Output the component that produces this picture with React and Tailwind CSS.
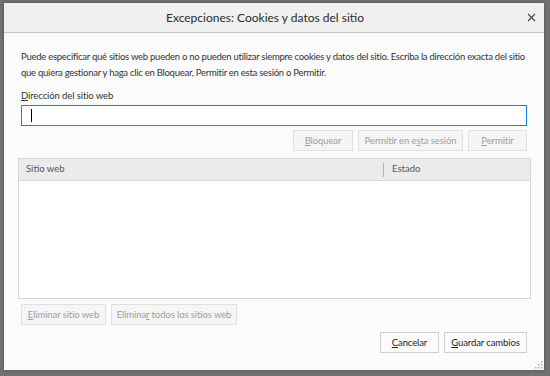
import React from "react";

const font = { fontFamily: "Lato, 'Noto Sans', sans-serif" };

function Btn({ children, disabled, className = "" }) {
  return (
    <div
      className={`h-[21px] flex items-center justify-center border text-[9.5px] tracking-[-0.1px] leading-none whitespace-nowrap ${
        disabled
          ? "border-[#e0e0e0] bg-[#f5f5f5] text-[#9d9d9d]"
          : "border-[#cfcfcf] bg-[#fbfbfb] text-[#222]"
      } ${className}`}
    >
      {children}
    </div>
  );
}

export default function App() {
  return (
    <div
      className="w-[550px] h-[376px] bg-[#717171] overflow-hidden"
      style={font}
    >
      <div className="pl-[4px] pt-[3px]">
        <div className="w-[540px] h-[367px] bg-[#fbfbfb] flex flex-col shadow-[0_0_3px_rgba(0,0,0,0.3)]">
          <div className="h-[30px] bg-[#f0f0f0] border-b border-[#c4c4c4] flex items-center relative shrink-0">
            <div className="flex-1 text-center text-[12px] text-[#2b2b2b] pr-[18px]">
              Excepciones: Cookies y datos del sitio
            </div>
            <div className="absolute right-[6px] top-[7px] w-[14px] h-[14px] flex items-center justify-center">
              <svg width="9" height="9" viewBox="0 0 9 9">
                <path d="M1 1L8 8M8 1L1 8" stroke="#444" strokeWidth="1.1" />
              </svg>
            </div>
          </div>
          <div className="flex flex-col px-[17px] pt-[16px] relative flex-1">
            <div className="text-[9.5px] tracking-[-0.26px] leading-[16px] text-[#333] whitespace-nowrap">
              <div>
                Puede especificar qué sitios web pueden o no pueden utilizar siempre cookies y datos del sitio. Escriba la dirección exacta del sitio
              </div>
              <div>
                que quiera gestionar y haga clic en Bloquear, Permitir en esta sesión o Permitir.
              </div>
            </div>
            <div className="mt-[7px] text-[9.5px] tracking-[-0.1px] leading-[16px] text-[#333]">
              <span className="underline">D</span>irección del sitio web
            </div>
            <div className="mt-[1px] h-[21px] border border-[#0a84ff] bg-white flex items-center pl-[9px]">
              <div className="w-px h-[13px] bg-black" />
            </div>
            <div className="mt-[4px] flex justify-end gap-[5px]">
              <Btn disabled className="w-[60px]">
                <span><span className="underline">B</span>loquear</span>
              </Btn>
              <Btn disabled className="w-[105px]">
                <span>Permitir en e<span className="underline">s</span>ta sesión</span>
              </Btn>
              <Btn disabled className="w-[59px]">
                <span><span className="underline">P</span>ermitir</span>
              </Btn>
            </div>
            <div className="mt-[7px] ml-[-3px] mr-[-4px] h-[141px] border border-[#d6d6d6] bg-white flex flex-col">
              <div className="h-[22px] bg-[#ebebeb] border-b border-[#d6d6d6] flex items-center text-[9.5px] text-[#555]">
                <div className="w-[365px] pl-[7px] border-r border-[#b5b5b5] h-[14px] flex items-center">
                  Sitio web
                </div>
                <div className="pl-[8px]">Estado</div>
              </div>
            </div>
            <div className="mt-[5px] flex gap-[5px]">
              <Btn disabled className="w-[85px]">
                <span><span className="underline">E</span>liminar sitio web</span>
              </Btn>
              <Btn disabled className="w-[126px]">
                <span>Elimina<span className="underline">r</span> todos los sitios web</span>
              </Btn>
            </div>
            <div className="mt-[7px] flex justify-end gap-[5px]">
              <Btn className="w-[59px]">
                <span><span className="underline">C</span>ancelar</span>
              </Btn>
              <Btn className="w-[83px]">
                <span><span className="underline">G</span>uardar cambios</span>
              </Btn>
            </div>
            <div className="absolute right-[1px] bottom-[1px]">
              <svg width="8" height="8" viewBox="0 0 8 8" fill="#b0b0b0">
                <rect x="6" y="0" width="1.5" height="1.5" />
                <rect x="3" y="3" width="1.5" height="1.5" />
                <rect x="6" y="3" width="1.5" height="1.5" />
                <rect x="0" y="6" width="1.5" height="1.5" />
                <rect x="3" y="6" width="1.5" height="1.5" />
                <rect x="6" y="6" width="1.5" height="1.5" />
              </svg>
            </div>
          </div>
        </div>
      </div>
    </div>
  );
}
